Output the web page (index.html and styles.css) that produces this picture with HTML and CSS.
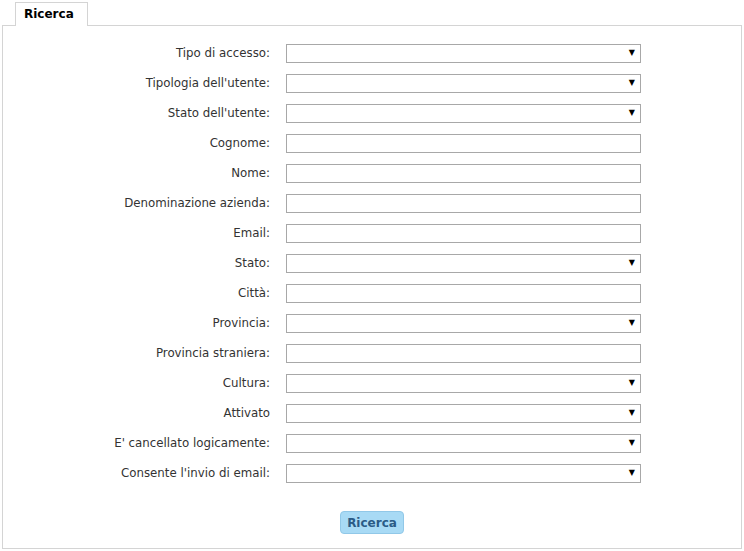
FILE: index.html
```html
<!DOCTYPE html>
<html lang="it">
<head>
    <meta charset="UTF-8">
    <title>Ricerca</title>
    <link rel="stylesheet" href="styles.css">
</head>
<body>
<div class="tabs">
    <span class="tab">Ricerca</span>
</div>
<div class="panel">
    <form class="search-form">
        <label>Tipo di accesso:</label>
        <div class="select"><span class="arrow">&#9660;</span></div>
        <label>Tipologia dell'utente:</label>
        <div class="select"><span class="arrow">&#9660;</span></div>
        <label>Stato dell'utente:</label>
        <div class="select"><span class="arrow">&#9660;</span></div>
        <label>Cognome:</label>
        <input type="text">
        <label>Nome:</label>
        <input type="text">
        <label>Denominazione azienda:</label>
        <input type="text">
        <label>Email:</label>
        <input type="text">
        <label>Stato:</label>
        <div class="select"><span class="arrow">&#9660;</span></div>
        <label>Città:</label>
        <input type="text">
        <label>Provincia:</label>
        <div class="select"><span class="arrow">&#9660;</span></div>
        <label>Provincia straniera:</label>
        <input type="text">
        <label>Cultura:</label>
        <div class="select"><span class="arrow">&#9660;</span></div>
        <label>Attivato</label>
        <div class="select"><span class="arrow">&#9660;</span></div>
        <label>E' cancellato logicamente:</label>
        <div class="select"><span class="arrow">&#9660;</span></div>
        <label>Consente l'invio di email:</label>
        <div class="select"><span class="arrow">&#9660;</span></div>
    </form>
    <div class="actions">
        <button type="button" class="btn">Ricerca</button>
    </div>
</div>
</body>
</html>
```

FILE: styles.css
```css
*{
    margin: 0;
    padding: 0;
    box-sizing: border-box;
}
body{
    padding: 2px 2px 0 2px;
    font-family: "DejaVu Sans", Verdana, sans-serif;
    font-size: 12px;
    color: #333;
    background: #fff;
}
.tabs{
    display: flex;
    padding-left: 13px;
}
.tab{
    display: block;
    width: 73px;
    height: 24px;
    margin-bottom: -1px;
    padding: 4px 0 0 8px;
    border: 1px solid #d4d4d4;
    border-bottom: none;
    background: #fff;
    font-weight: bold;
    font-size: 12px;
    color: #000;
    position: relative;
    z-index: 1;
}
.panel{
    height: 524px;
    border: 1px solid #d4d4d4;
    padding-top: 18px;
}
.search-form{
    display: grid;
    grid-template-columns: 267px 355px;
    column-gap: 16px;
    row-gap: 11px;
    align-items: center;
}
.search-form label{
    text-align: right;
    font-size: 11.8px;
    color: #333;
    position: relative;
    top: -1px;
}
.search-form input,
.select{
    height: 19px;
    border: 1px solid #a8a8a8;
    background: #fff;
}
.select{
    position: relative;
}
.arrow{
    position: absolute;
    right: 5px;
    top: 3px;
    font-size: 8px;
    color: #000;
}
.actions{
    display: flex;
    justify-content: center;
    margin-top: 28px;
}
.btn{
    height: 23px;
    padding: 0 6px;
    border: 1px solid #91c8e8;
    border-radius: 4px;
    background: #a8daf5;
    color: #2b5b86;
    font-family: "DejaVu Sans", Verdana, sans-serif;
    font-size: 12px;
    font-weight: bold;
}
```
